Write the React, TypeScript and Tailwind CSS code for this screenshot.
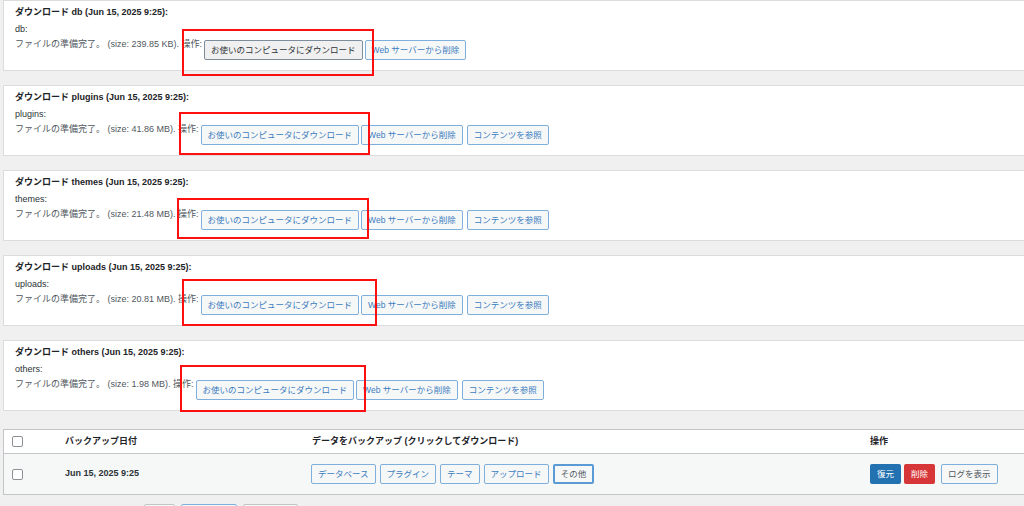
import React from 'react';

interface DownloadItem {
  key: string;
  size: string;
  browse: boolean;
  mark: { left: number; top: number; width: number; height: number };
}

const items: DownloadItem[] = [
  { key: 'db', size: '239.85 KB', browse: false, mark: { left: 178, top: 28, width: 192, height: 47 } },
  { key: 'plugins', size: '41.86 MB', browse: true, mark: { left: 175, top: 26, width: 191, height: 43 } },
  { key: 'themes', size: '21.48 MB', browse: true, mark: { left: 173, top: 27, width: 192, height: 41 } },
  { key: 'uploads', size: '20.81 MB', browse: true, mark: { left: 178, top: 23, width: 195, height: 47 } },
  { key: 'others', size: '1.98 MB', browse: true, mark: { left: 176, top: 24, width: 186, height: 47 } },
];

const btn =
  'h-[20px] px-[6px] flex items-center justify-center rounded-[2px] border border-[#7fb0dd] bg-[#f6f7f7] text-[8.5px] leading-none text-[#3b7cbf] whitespace-nowrap';

const Checkbox: React.FC = () => (
  <div className="w-[11px] h-[11px] rounded-[2px] border border-[#8c8f94] bg-white" />
);

const DownloadPanel: React.FC<{ item: DownloadItem; first: boolean }> = ({ item, first }) => (
  <div className="relative w-[1060px] h-[71px] border border-[#dcdcde] bg-white pl-[11px] pt-[4px]">
    <div className="text-[9px] leading-[14px] font-bold text-[#1d2327]">
      ダウンロード {item.key} (Jun 15, 2025 9:25):
    </div>
    <div className="mt-[3px] text-[9px] leading-[14px] text-[#2c3338]">{item.key}:</div>
    <div className="mt-[4px] flex items-start gap-[2px]">
      <span className="text-[9px] leading-[9px] text-[#50575e] whitespace-nowrap">
        ファイルの準備完了。 (size: {item.size}). 操作:
      </span>
      <button
        className={
          first
            ? 'h-[20px] px-[6px] flex items-center rounded-[2px] border border-[#7e8d9c] bg-[#f0f0f1] text-[8.5px] leading-none text-[#2c3338] whitespace-nowrap'
            : btn
        }
      >
        お使いのコンピュータにダウンロード
      </button>
      <button className={btn}>Web サーバーから削除</button>
      {item.browse && <button className={btn + ' ml-[2px]'}>コンテンツを参照</button>}
    </div>
    <div
      className="absolute border-2 border-[#ff1010] pointer-events-none"
      style={{ left: item.mark.left, top: item.mark.top, width: item.mark.width, height: item.mark.height }}
    />
  </div>
);

export default function App() {
  return (
    <div className="w-[1024px] h-[506px] overflow-hidden bg-[#f0f0f1] pl-[3px] font-['Liberation_Sans','Noto_Sans_CJK_JP',sans-serif]">
      <div className="flex flex-col gap-[14px]">
        {items.map((item, i) => (
          <DownloadPanel key={item.key} item={item} first={i === 0} />
        ))}
      </div>

      <div className="mt-[18px] w-[1060px] border border-[#c3c4c7]">
        <div className="grid grid-cols-[61px_247px_558px_1fr] items-center h-[24px] bg-white border-b border-[#c3c4c7] text-[9px] font-bold text-[#1d2327]">
          <div className="pl-[8px]">
            <Checkbox />
          </div>
          <div>バックアップ日付</div>
          <div>データをバックアップ (クリックしてダウンロード)</div>
          <div>操作</div>
        </div>
        <div className="grid grid-cols-[61px_246px_559px_1fr] items-center h-[40px] bg-[#f6f7f7]">
          <div className="pl-[8px]">
            <Checkbox />
          </div>
          <div className="text-[9px] font-bold text-[#2c3338]">Jun 15, 2025 9:25</div>
          <div className="flex items-center gap-[4px]">
            <button className={btn}>データベース</button>
            <button className={btn}>プラグイン</button>
            <button className={btn}>テーマ</button>
            <button className={btn}>アップロード</button>
            <button className="h-[20px] px-[6px] flex items-center rounded-[2px] border-2 border-[#5b9bd5] bg-[#f6f7f7] text-[8.5px] leading-none text-[#50575e]">
              その他
            </button>
          </div>
          <div className="flex items-center">
            <button className="h-[20px] px-[7px] flex items-center rounded-[2px] bg-[#2271b1] text-[8.5px] leading-none text-white">
              復元
            </button>
            <button className="ml-[3px] h-[20px] px-[7px] flex items-center rounded-[2px] bg-[#d63638] text-[8.5px] leading-none text-white">
              削除
            </button>
            <button className={btn + ' ml-[6px] text-[#50575e]'}>ログを表示</button>
          </div>
        </div>
      </div>

      <div className="mt-[9px] pl-[141px] flex gap-[6px]">
        <div className="w-[31px] h-[20px] rounded-[2px] border border-[#c3c4c7] bg-[#f6f7f7]" />
        <div className="w-[56px] h-[20px] rounded-[2px] border border-[#7fb0dd] bg-[#f6f7f7]" />
        <div className="w-[55px] h-[20px] rounded-[2px] border border-[#c3c4c7] bg-[#f6f7f7]" />
      </div>
    </div>
  );
}
